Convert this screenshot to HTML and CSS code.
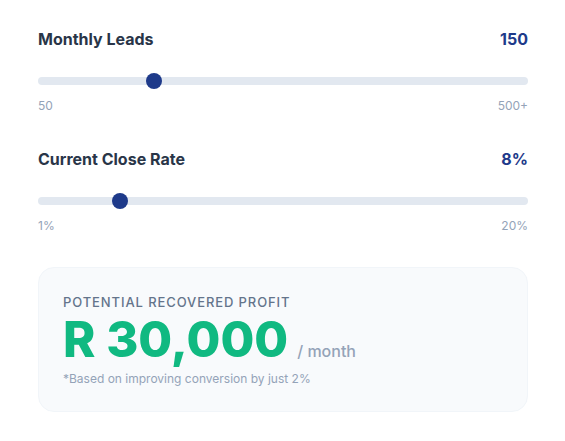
FILE: index.html
```html
<!DOCTYPE html>
<html lang="en">
<head>
<meta charset="utf-8">
<title>Profit Calculator</title>
<link rel="stylesheet" href="styles.css">
</head>
<body>
<div class="calc">
  <section class="field">
    <div class="field-head">
      <span class="field-label">Monthly Leads</span>
      <span class="field-value">150</span>
    </div>
    <div class="track">
      <span class="thumb" style="left: 23.7%"></span>
    </div>
    <div class="range-labels">
      <span>50</span>
      <span>500+</span>
    </div>
  </section>
  <section class="field">
    <div class="field-head">
      <span class="field-label">Current Close Rate</span>
      <span class="field-value">8%</span>
    </div>
    <div class="track">
      <span class="thumb" style="left: 16.7%"></span>
    </div>
    <div class="range-labels">
      <span>1%</span>
      <span>20%</span>
    </div>
  </section>
  <div class="result">
    <div class="result-label">POTENTIAL RECOVERED PROFIT</div>
    <div class="result-amount"><span class="amount">R 30,000</span><span class="per">/ month</span></div>
    <div class="result-note">*Based on improving conversion by just 2%</div>
  </div>
</div>
</body>
</html>
```
FILE: styles.css
```css
html, body {
  margin: 0;
  padding: 0;
  background: #ffffff;
}
body {
  font-family: Inter, "Noto Sans", "Liberation Sans", sans-serif;
}
.calc {
  width: 490px;
  padding: 27px 0 0 38px;
  display: flex;
  flex-direction: column;
}
.field {
  display: flex;
  flex-direction: column;
  margin-bottom: 33px;
}
.field-head {
  display: flex;
  justify-content: space-between;
  align-items: baseline;
  line-height: 24px;
}
.field-label {
  font-size: 16px;
  font-weight: 700;
  color: #293548;
}
.field-value {
  font-size: 16px;
  font-weight: 700;
  color: #1e3a8a;
}
.track {
  position: relative;
  height: 8px;
  margin-top: 26px;
  border-radius: 4px;
  background: #e2e8f0;
}
.thumb {
  position: absolute;
  top: 50%;
  width: 16px;
  height: 16px;
  border-radius: 50%;
  background: #1e3a8a;
  transform: translate(-50%, -50%);
}
.range-labels {
  display: flex;
  justify-content: space-between;
  margin-top: 13px;
  font-size: 12px;
  line-height: 16px;
  color: #94a3b8;
}
.result {
  border: 1px solid #f1f5f9;
  border-radius: 16px;
  background: #f8fafc;
  padding: 24px;
}
.result-label {
  font-size: 13px;
  line-height: 20px;
  letter-spacing: 0.9px;
  color: #64748b;
  font-weight: 500;
}
.result-amount {
  line-height: 55px;
  height: 55px;
}
.amount {
  font-size: 49px;
  font-weight: 800;
  color: #10b981;
}
.per {
  margin-left: 9px;
  font-size: 16px;
  font-weight: 500;
  color: #94a3b8;
}
.result-note {
  margin-top: 4px;
  font-size: 12px;
  line-height: 16px;
  color: #94a3b8;
}
```
